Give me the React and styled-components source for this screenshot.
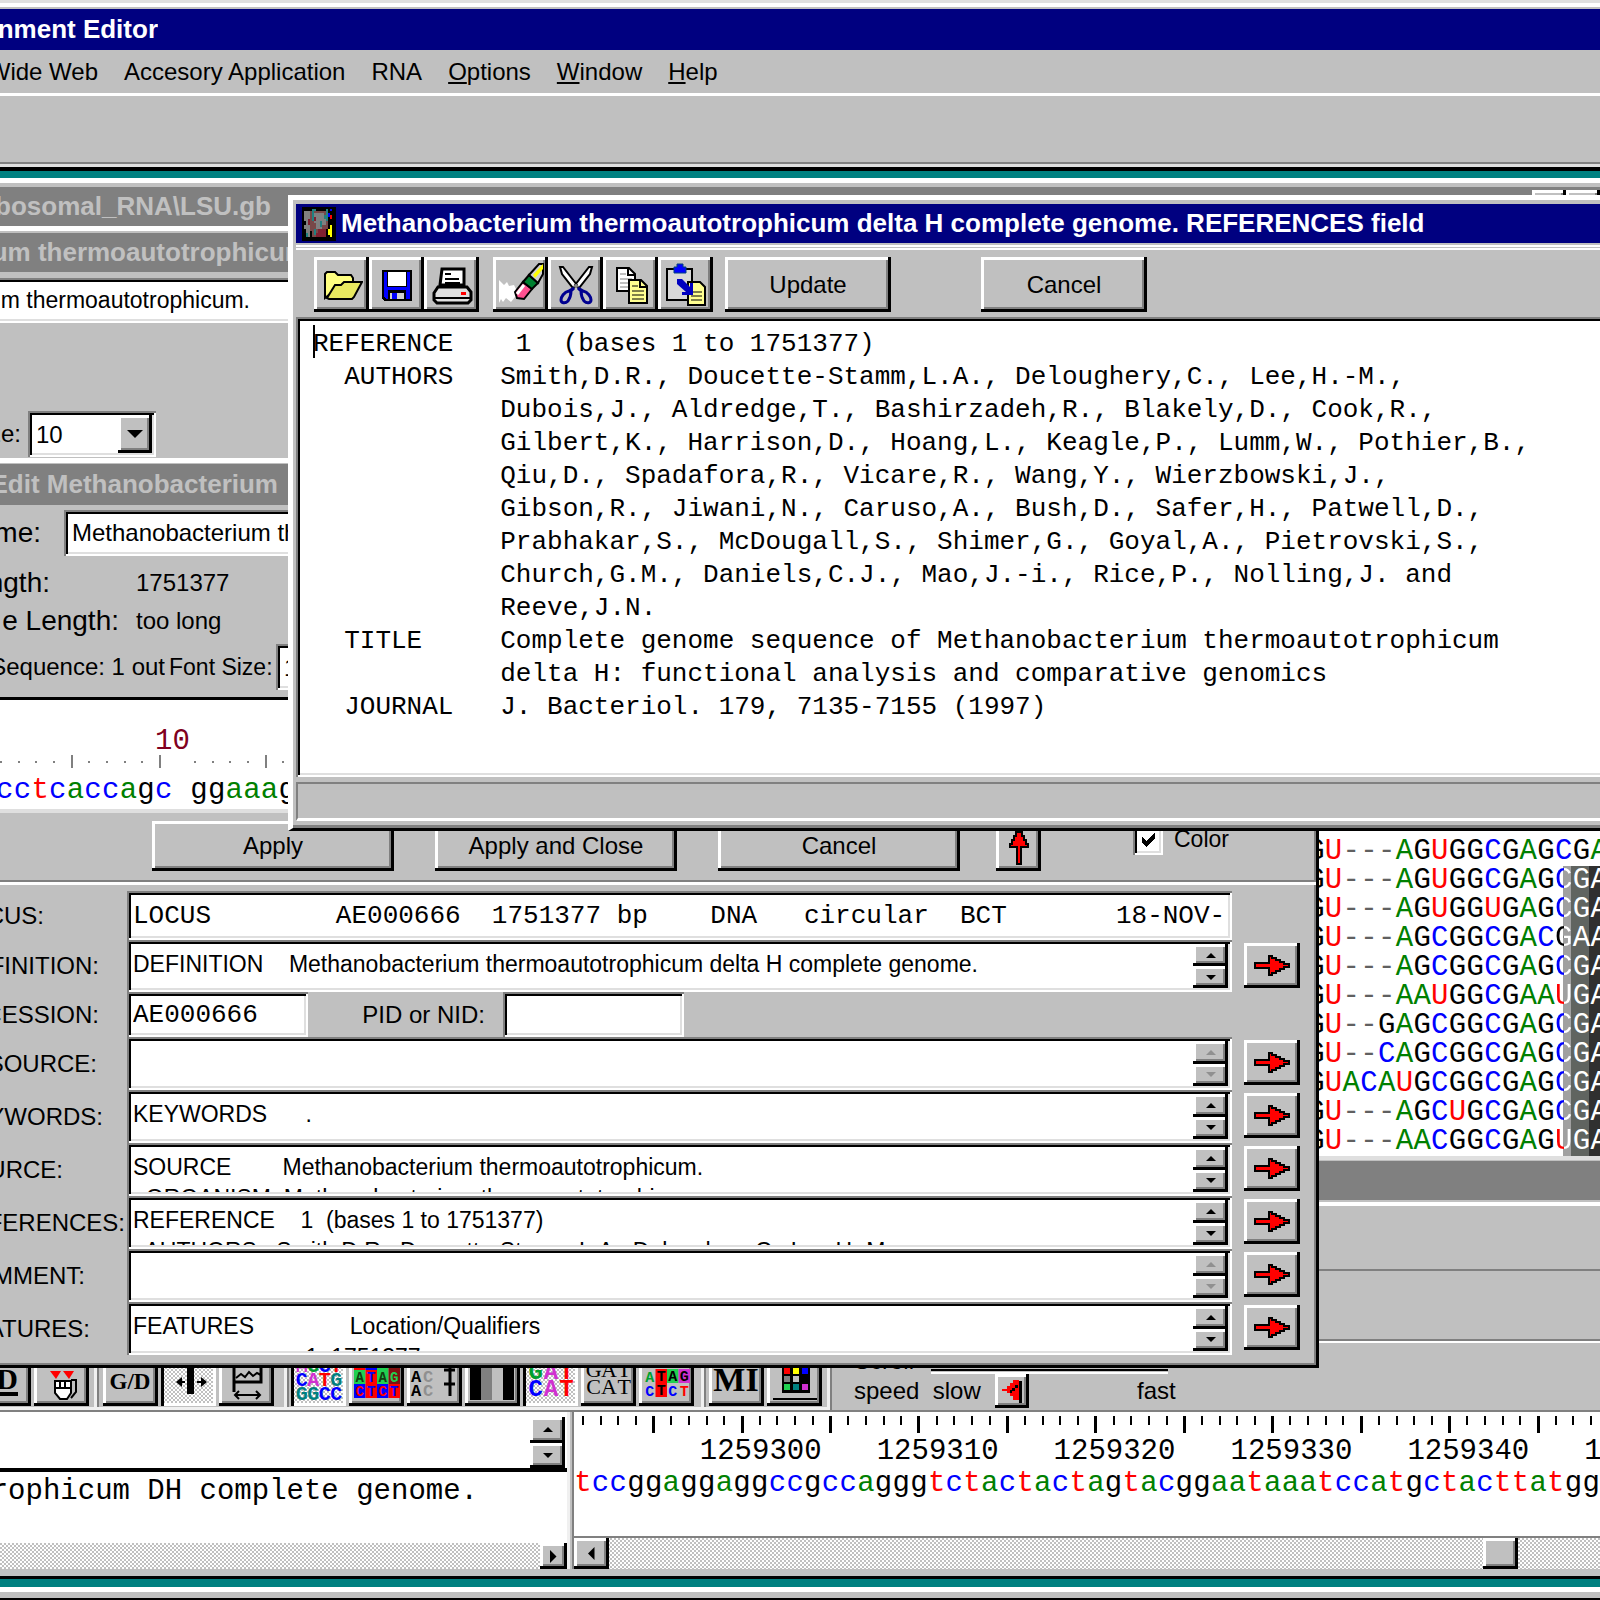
import React from "react";
import styled, { createGlobalStyle, css } from "styled-components";

const UI = '"Liberation Sans", Arial, sans-serif';
const MONO = '"Liberation Mono", "Courier New", monospace';
const FACE = "#c0c0c0";

const GlobalStyle = createGlobalStyle`
  * {
    box-sizing: border-box;
  }

  html, body, #root {
    height: 100%;
    margin: 0;
  }

  body {
    overflow: hidden;
    font-family: ${UI};
    font-size: 24px;
    color: #000;
    background-color: ${FACE};
  }

  button, input, select, textarea {
    font: inherit;
    color: inherit;
    margin: 0;
    padding: 0;
    border: none;
    border-radius: 0;
    outline: none;
  }
`;

const raised = css`
  background-color: ${FACE};
  box-shadow: inset -3px -3px #000, inset 3px 3px #fff, inset -5px -5px #808080;
`;

const sunken = css`
  background-color: #fff;
  box-shadow: inset 2px 2px #808080, inset -2px -2px #fff, inset 4px 4px #000,
    inset -4px -4px #dfdfdf;
`;

const dither = css`
  background: repeating-conic-gradient(#fff 0 25%, ${FACE} 0 50%) 0 0 / 4px 4px;
`;

/* ---- frame ---- */

const Frame = styled.div`
  height: 100vh;
  display: flex;
  flex-direction: column;
  overflow: hidden;
`;

const TopEdge = styled.div`
  height: 9px;
  border-top: 3px solid #dfdfdf;
  border-bottom: 2px solid ${FACE};
  background-color: #fff;
`;

const TitleBar = styled.div`
  display: flex;
  align-items: center;
  flex: none;
  height: ${(p) => (p.$main ? 41 : 39)}px;
  background-color: ${(p) => (p.$active ? "#000080" : "#808080")};
  color: ${(p) => (p.$active ? "#fff" : FACE)};
  font-size: 26px;
  font-weight: bold;
  white-space: pre;
`;

/* text that runs off the left side of the screen */
const Clipped = styled.span`
  display: flex;
  justify-content: flex-end;
  flex: none;
  width: ${(p) => p.$end}px;
  overflow: hidden;
  white-space: pre;
`;

const BigLabel = styled(Clipped)`
  font-size: 28px;
`;

const MenuBar = styled.nav`
  display: flex;
  align-items: center;
  gap: 26px;
  height: 43px;
  flex: none;
`;

const MenuItem = styled.button`
  background: none;
  white-space: pre;
`;

const MainTools = styled.div`
  height: 78px;
  flex: none;
  border-top: 3px solid #fff;
  border-bottom: 4px solid #000;
  box-shadow: inset 0 -3px #dfdfdf, inset 0 -5px #808080;
`;

const Client = styled.main`
  flex: 1;
  position: relative;
  overflow: hidden;
  background-color: #008080;
`;

const BottomEdge = styled.div`
  height: 13px;
  flex: none;
  border-top: 5px solid #fff;
  border-bottom: 2px solid #000;
`;

const Window = styled.section`
  position: absolute;
  display: flex;
  flex-direction: column;
  overflow: hidden;
  background-color: ${FACE};
`;

/* ---- shared controls ---- */

const PushButton = styled.button`
  ${raised}
  flex: none;
  width: ${(p) => p.$w}px;
  height: ${(p) => p.$h || 55}px;
  display: flex;
  align-items: center;
  justify-content: center;
`;

const ToolButton = styled(PushButton)`
  width: 55px;
  ${(p) =>
        p.$down &&
        css`
      ${dither}
      box-shadow: inset 3px 3px #000, inset -3px -3px #fff;
    `}
`;

const ComboBox = styled.div`
  ${sunken}
  display: flex;
  align-items: center;
  position: relative;
  flex: none;
  width: ${(p) => p.$w}px;
  height: 46px;
  padding: 4px;
`;

const ComboSelect = styled.select`
  appearance: none;
  background: transparent;
  width: 100%;
  height: 100%;
  padding-left: 4px;
`;

const ComboArrow = styled.span`
  ${raised}
  position: absolute;
  right: 4px;
  top: 4px;
  bottom: 4px;
  width: 34px;
  display: flex;
  align-items: center;
  justify-content: center;
  pointer-events: none;
`;

const Spinner = styled.div`
  display: flex;
  flex-direction: column;
  flex: none;
  width: 35px;
`;

const SpinButton = styled.button`
  ${raised}
  flex: 1;
  min-height: 0;
  display: flex;
  align-items: center;
  justify-content: center;
  color: ${(p) => (p.disabled ? "#909090" : "#000")};
`;

const triangles = {
    up: "M0 6L6 0L12 6z",
    down: "M0 0h12L6 6z",
    left: "M6 0v12L0 6z",
    right: "M0 0v12L6 6z",
};

const Triangle = ({ dir = "down", size = 10 }) => {
    const side = dir === "left" || dir === "right";
    return (
        <svg
            width={side ? size / 2 : size}
            height={side ? size : size / 2}
            viewBox={side ? "0 0 6 12" : "0 0 12 6"}
            fill="currentColor"
        >
            <path d={triangles[dir]} />
        </svg>
    );
};

const Spin = ({ name, disabled }) => (
    <Spinner>
        <SpinButton aria-label={`${name} up`} disabled={disabled}>
            <Triangle dir="up" />
        </SpinButton>
        <SpinButton aria-label={`${name} down`} disabled={disabled}>
            <Triangle dir="down" />
        </SpinButton>
    </Spinner>
);

/* ---- sequences ---- */

const baseColor = {
    a: "#008000",
    A: "#008000",
    c: "#0000ff",
    C: "#0000ff",
    t: "#ff0000",
    U: "#ff0000",
    "-": "#606060",
};

const Bases = styled.div`
  display: grid;
  grid-template-columns: repeat(${(p) => p.$n}, minmax(0, 1fr));
  font-family: ${MONO};
  font-size: 29px;
  line-height: ${(p) => p.$lh || 32}px;
`;

const Base = styled.span`
  display: flex;
  justify-content: center;
  white-space: pre;
  color: ${(p) => p.$color || "#000"};
`;

const HalfBase = styled(Base)`
  color: transparent;
  background: linear-gradient(90deg, ${(p) => p.$color || "#000"} 50%, #fff 50%);
  background-clip: text;
`;

const Sequence = ({ text, lh }) => (
    <Bases $n={text.length} $lh={lh}>
        {text.split("").map((b, i) => (
            <Base key={i} $color={baseColor[b]}>{b}</Base>
        ))}
    </Bases>
);

/* ---- alignment window ---- */

const WindowButtons = styled.div`
  display: flex;
  margin-left: auto;
  height: 33px;
`;

const AlignPane = styled.div`
  flex: 1;
  margin-left: 1307px;
  margin-right: -8px;
  padding-top: 611px;
  background-color: #fff;
`;

const AlignRow = styled.div`
  height: 29px;
  background: ${(p) =>
        p.$shaded
            ? "linear-gradient(90deg, transparent 256px, #a0a0a0 256px 264px, #606460 264px 282px, #303030 282px)"
            : "none"};
`;

const alignment = [
    "GU---AGUGGCGAGCGA",
    "GU---AGUGGCGAGCGA",
    "GU---AGUGGUGAGCGA",
    "GU---AGCGGCGACGAA",
    "GU---AGCGGCGAGCGA",
    "GU---AAUGGCGAAUGA",
    "GU--GAGCGGCGAGCGA",
    "GU--CAGCGGCGAGCGA",
    "GUACAUGCGGCGAGCGA",
    "GU---AGCUGCGAGCGA",
    "GU---AACGGCGAGUGA",
];

const AlignmentWindow = styled(Window)`
  top: 7px;
  left: 0;
  right: 0;
  height: 979px;
  border-top: 5px solid #fff;
  padding-top: 4px;
`;

const Alignment = () => (
    <AlignmentWindow>
        <TitleBar>
            <Clipped $end={271}>ribosomal_RNA\LSU.gb</Clipped>
            <WindowButtons>
                <PushButton $w={34} $h={31} aria-label="Minimize" />
                <PushButton $w={34} $h={31} aria-label="Restore" />
            </WindowButtons>
        </TitleBar>
        <AlignPane>
            {alignment.map((row, r) => (
                <AlignRow key={r} $shaded={r > 0}>
                    <Bases $n={row.length} $lh={29}>
                        {row.split("").map((b, i) => {
                            if (r > 0 && i === 14) {
                                return <HalfBase key={i} $color={baseColor[b]}>{b}</HalfBase>;
                            }
                            return <Base key={i} $color={r > 0 && i > 14 ? "#fff" : baseColor[b]}>{b}</Base>;
                        })}
                    </Bases>
                </AlignRow>
            ))}
        </AlignPane>
    </AlignmentWindow>
);

/* ---- genome window behind the editor ---- */

const OrganismWindow = styled(Window)`
  top: 55px;
  left: 0;
  width: 900px;
  height: 300px;
  border-top: 5px solid #fff;
  padding-top: 2px;
`;

const OrganismField = styled.div`
  ${sunken}
  display: flex;
  align-items: center;
  height: 45px;
  margin: 6px 0 0 -10px;
`;

const OrganismInput = styled.input`
  width: 260px;
  text-align: right;
  background: transparent;
  font-size: 23px;
`;

const SizeRow = styled.div`
  display: flex;
  align-items: center;
  gap: 7px;
  margin-top: 88px;
`;

const Organism = () => (
    <OrganismWindow>
        <TitleBar>
            <Clipped $end={308}>Methanobacterium thermoautotrophicum</Clipped>
        </TitleBar>
        <OrganismField>
            <OrganismInput aria-label="Organism" defaultValue="m thermoautotrophicum." />
        </OrganismField>
        <SizeRow>
            <Clipped as="label" htmlFor="view-size" $end={21}>Size:</Clipped>
            <ComboBox $w={128}>
                <ComboSelect id="view-size" defaultValue="10">
                    <option>10</option>
                </ComboSelect>
                <ComboArrow>
                    <Triangle size={16} />
                </ComboArrow>
            </ComboBox>
        </SizeRow>
    </OrganismWindow>
);

/* ---- sequence editor ---- */

const EditWindow = styled(Window)`
  top: 287px;
  left: 0;
  width: 1319px;
  border-top: 5px solid #fff;
  border-right: 3px solid #000;
  border-bottom: 3px solid #000;
  box-shadow: inset -2px -2px #808080;
  padding: 1px 0 10px;
`;

const Row = styled.div`
  display: flex;
  align-items: center;
  gap: ${(p) => p.$gap || 0}px;
  height: ${(p) => p.$h}px;
`;

const NameInput = styled.input`
  ${sunken}
  width: 800px;
  height: 46px;
  padding: 0 8px;
`;

const FontLabel = styled.label`
  flex: none;
  width: 103px;
  font-size: 23px;
  white-space: pre;
`;

const SeqPane = styled.div`
  height: 116px;
  border-top: 3px solid #000;
  border-bottom: 4px solid #dfdfdf;
  background-color: #fff;
  padding-top: 29px;
`;

const SeqBox = styled.div`
  width: 300px;
  margin-left: -4px;
`;

const Position = styled.div`
  padding-left: 159px;
  font-family: ${MONO};
  font-size: 29px;
  line-height: 26px;
  color: #800020;
`;

const Ruler = styled.div`
  display: grid;
  grid-template-columns: repeat(17, minmax(0, 1fr));
  align-items: center;
  height: 8px;
`;

const RulerMark = styled.span`
  width: 2px;
  margin-left: 4px;
  height: ${(p) => (p.$major ? 13 : 2)}px;
  background-color: ${(p) => (p.$blank ? "transparent" : "#808080")};
`;

const Actions = styled.div`
  display: flex;
  gap: 41px;
  height: 69px;
  padding: 8px 0 0 152px;
  border-bottom: 2px solid #808080;
`;

const MoreActions = styled.div`
  display: flex;
  gap: 92px;
  margin-left: -5px;
`;

const Divider = styled.div`
  height: 3px;
  margin-bottom: 6px;
  background-color: #fff;
`;

const ColorCheck = styled.label`
  display: flex;
  align-items: center;
  gap: 11px;
  height: 37px;
  font-size: 23px;
`;

const CheckInput = styled.input`
  ${sunken}
  appearance: none;
  width: 30px;
  height: 30px;
`;

const CheckWrap = styled.span`
  position: relative;
  display: flex;

  svg {
    position: absolute;
    left: 8px;
    top: 7px;
    pointer-events: none;
  }

  input:not(:checked) + svg {
    display: none;
  }
`;

const Field = styled.div`
  display: flex;
  height: ${(p) => p.$h || 53}px;
  padding-right: 16px;
`;

const FieldLabel = styled(Clipped).attrs({ as: "label" })`
  align-self: center;
  margin-right: ${(p) => 127 - p.$end}px;
`;

const FieldBox = styled.div`
  ${sunken}
  display: flex;
  flex: ${(p) => (p.$w ? "none" : 1)};
  width: ${(p) => p.$w || 0}px;
  padding: 4px;
`;

const FieldText = styled.textarea`
  flex: 1;
  display: block;
  resize: none;
  overflow: hidden;
  background: transparent;
  padding: 5px 2px 0;
  font-size: 23px;
  line-height: 31px;
  white-space: pre;
`;

const FieldInput = styled.input`
  flex: 1;
  min-width: 0;
  background: transparent;
  padding: 0 2px;
  font-family: ${MONO};
  font-size: 26px;
`;

const FieldSide = styled.div`
  display: flex;
  align-items: flex-start;
  justify-content: flex-end;
  width: 68px;
  padding-top: 3px;
`;

const PidLabel = styled.label`
  width: 195px;
  padding-right: 18px;
  text-align: right;
  align-self: center;
`;

const ArrowRight = () => (
    <svg width="36" height="22" viewBox="0 0 36 22" shapeRendering="crispEdges">
        <path d="M1 8h14v-7h3v2h4v2h4v2h4v2h5v3h-5v2h-4v2h-4v2h-4v2h-3v-7h-14z" fill="#f00" stroke="#000" strokeWidth="2" />
    </svg>
);

const ArrowUp = () => (
    <svg width="22" height="38" viewBox="0 0 22 38" shapeRendering="crispEdges">
        <path d="M9 37v-17h-7v-3h2v-4h2v-4h2v-4h2v-4h2v4h2v4h2v4h2v4h2v3h-7v17z" fill="#f00" stroke="#000" strokeWidth="2" />
    </svg>
);

const fields = [
    { name: "DEFINITION", end: 99, h: 52, text: "DEFINITION    Methanobacterium thermoautotrophicum delta H complete genome." },
    { name: "DBSOURCE", end: 97, text: "", empty: true },
    { name: "KEYWORDS", end: 103, text: "KEYWORDS      ." },
    { name: "SOURCE", end: 63, text: "SOURCE        Methanobacterium thermoautotrophicum.\n  ORGANISM  Methanobacterium thermoautotrophicum" },
    { name: "REFERENCES", end: 125, text: "REFERENCE    1  (bases 1 to 1751377)\n  AUTHORS   Smith,D.R., Doucette-Stamm,L.A., Deloughery,C., Lee,H.-M.," },
    { name: "COMMENT", end: 85, text: "", empty: true },
    { name: "FEATURES", end: 90, text: "FEATURES               Location/Qualifiers\n                           1..1751377" },
];

const TextField = ({ name, end, h, text, empty }) => (
    <Field $h={h}>
        <FieldLabel $end={end} htmlFor={name}>{name}:</FieldLabel>
        <FieldBox>
            <FieldText id={name} defaultValue={text} spellCheck={false} />
            <Spin name={name} disabled={empty} />
        </FieldBox>
        <FieldSide>
            <PushButton $w={56} $h={45} aria-label={`Edit ${name}`}>
                <ArrowRight />
            </PushButton>
        </FieldSide>
    </Field>
);

const Editor = () => (
    <EditWindow>
        <TitleBar $main>
            <Clipped $end={278}>Edit Methanobacterium</Clipped>
        </TitleBar>
        <Row $h={56} $gap={23}>
            <BigLabel as="label" htmlFor="seq-name" $end={41}>Name:</BigLabel>
            <NameInput id="seq-name" defaultValue="Methanobacterium thermoautotrophicum" />
        </Row>
        <Row $h={44} $gap={86}>
            <BigLabel $end={50}>Length:</BigLabel>
            <span>1751377</span>
        </Row>
        <Row $h={32} $gap={17}>
            <BigLabel $end={119}>e Length:</BigLabel>
            <span>too long</span>
        </Row>
        <Row $h={60} $gap={4}>
            <Clipped $end={165}>Sequence: 1 out</Clipped>
            <FontLabel htmlFor="font-size">Font Size:</FontLabel>
            <ComboBox $w={128}>
                <ComboSelect id="font-size" defaultValue="10">
                    <option>10</option>
                </ComboSelect>
                <ComboArrow>
                    <Triangle size={16} />
                </ComboArrow>
            </ComboBox>
        </Row>
        <SeqPane>
            <SeqBox>
                <Position>10</Position>
                <Ruler>
                    {Array.from({ length: 17 }, (_, i) => (
                        <RulerMark key={i} $major={i === 4 || i === 9 || i === 15} $blank={i === 10} />
                    ))}
                </Ruler>
                <Sequence text="cctcaccagc ggaaag" lh={56} />
            </SeqBox>
        </SeqPane>
        <Actions>
            <PushButton $w={242} $h={50}>Apply</PushButton>
            <PushButton $w={242} $h={50}>Apply and Close</PushButton>
            <PushButton $w={242} $h={50}>Cancel</PushButton>
            <MoreActions>
                <PushButton $w={45} $h={50} aria-label="Move up">
                    <ArrowUp />
                </PushButton>
                <ColorCheck>
                    <CheckWrap>
                        <CheckInput type="checkbox" defaultChecked />
                        <svg width="15" height="16" viewBox="0 0 15 16" shapeRendering="crispEdges">
                            <path d="M1 5v6l4 4 9-9V0L5 9z" />
                        </svg>
                    </CheckWrap>
                    Color
                </ColorCheck>
            </MoreActions>
        </Actions>
        <Divider />
        <Field $h={49}>
            <FieldLabel $end={44} htmlFor="locus">LOCUS:</FieldLabel>
            <FieldBox>
                <FieldInput
                    id="locus"
                    defaultValue="LOCUS        AE000666  1751377 bp    DNA   circular  BCT       18-NOV-"
                />
            </FieldBox>
            <FieldSide />
        </Field>
        <TextField {...fields[0]} />
        <Field $h={45}>
            <FieldLabel $end={99} htmlFor="accession">ACCESSION:</FieldLabel>
            <FieldBox $w={181}>
                <FieldInput id="accession" defaultValue="AE000666" />
            </FieldBox>
            <PidLabel htmlFor="pid">PID or NID:</PidLabel>
            <FieldBox $w={181}>
                <FieldInput id="pid" />
            </FieldBox>
        </Field>
        {fields.slice(1).map((f) => (
            <TextField key={f.name} {...f} />
        ))}
    </EditWindow>
);

/* ---- sequence view at the bottom ---- */

const ViewWindow = styled(Window)`
  top: 985px;
  left: 0;
  right: 0;
  bottom: 8px;
  border-bottom: 3px solid #000;
  border-top: 4px solid #dfdfdf;
  padding: 1px 0 7px;
`;

const Strip = styled.div`
  flex: none;
  height: ${(p) => p.$h}px;
  border-bottom: 2px solid #808080;
`;

const WhiteLine = styled.div`
  flex: none;
  height: ${(p) => p.$h}px;
  margin-top: ${(p) => p.$mt || 0}px;
  background-color: #fff;
`;

const ViewTools = styled.div`
  display: flex;
  align-items: flex-start;
  flex: none;
  height: 69px;
  border-bottom: 2px solid #808080;
`;

const ToolGroup = styled.div`
  display: flex;
  gap: 3px;
  height: 67px;
  padding: 8px ${(p) => p.$end}px 0 ${(p) => p.$start || 0}px;
  border-right: 3px solid #f0f0f0;
  border-bottom: 3px solid #f0f0f0;
  box-shadow: 2px 0 #808080;
`;

const EdgeButton = styled(ToolButton)`
  margin-left: -24px;
`;

const SpeedBox = styled.div`
  display: grid;
  grid-template-columns: 123px 34px 72px auto;
  align-items: center;
  column-gap: 18px;
  padding: 5px 0 0 24px;
  line-height: 26px;
`;

const SpeedLabel = styled.span`
  white-space: pre;
`;

const SpeedTrack = styled.span`
  grid-column: 2 / 5;
  width: 237px;
  height: 5px;
  align-self: end;
  margin-left: -64px;
  border-top: 2px solid #000;
  border-bottom: 2px solid #fff;
`;

const Panes = styled.div`
  display: flex;
  flex: 1;
  min-height: 0;
  background-color: ${FACE};
`;

const NamePane = styled.div`
  display: flex;
  flex-direction: column;
  flex: none;
  width: 567px;
  background-color: #fff;
`;

const NameTop = styled.div`
  display: flex;
  justify-content: flex-end;
  height: 60px;
  padding: 5px 2px 0 0;
  border-bottom: 4px solid #000;
`;

const NameLine = styled.div`
  flex: 1;
  padding-top: 4px;
  font-family: ${MONO};
  font-size: 29px;
  line-height: 32px;
`;

const ScrollBar = styled.div`
  ${dither}
  display: flex;
  flex: none;
  justify-content: space-between;
  height: ${(p) => p.$h}px;
`;

const Splitter = styled.div`
  width: 7px;
  flex: none;
  background-color: ${FACE};
  border-left: 3px solid #f0f0f0;
  border-right: 2px solid #808080;
`;

const SeqView = styled.div`
  display: flex;
  flex-direction: column;
  flex: 1;
  min-width: 0;
  background-color: #fff;
`;

const SeqBody = styled.div`
  flex: 1;
  padding-top: 4px;
  border-bottom: 2px solid #808080;
`;

const Ticks = styled.div`
  display: grid;
  grid-template-columns: repeat(58, minmax(0, 1fr));
  justify-items: center;
  height: 20px;
`;

const Tick = styled.span`
  width: ${(p) => (p.$major ? 3 : 2)}px;
  height: ${(p) => (p.$major ? 17 : 9)}px;
  background-color: #000;
`;

const Numbers = styled.div`
  display: grid;
  grid-template-columns: repeat(58, minmax(0, 1fr));
  overflow: hidden;
  font-family: ${MONO};
  font-size: 29px;
  line-height: 32px;
`;

const Number = styled.span`
  grid-column: ${(p) => p.$col} / span ${(p) => Math.min(7, 59 - p.$col)};
  grid-row: 1;
  padding-left: 2px;
`;

const Thumb = styled(PushButton)`
  margin-right: 82px;
`;

const Letters = ({ rows, y, size = 15, step = 14, font = "Liberation Mono" }) => (
    <svg width="49" height="50" viewBox="0 0 49 50">
        {rows.map((row, r) =>
            row.map(([ch, fill, bg], i) => {
                const w = 46 / row.length;
                return (
                    <g key={`${r}-${i}`}>
                        {bg && <rect x={2 + i * w} y={y + r * step - 13} width={w} height="14" fill={bg} />}
                        <text
                            x={2 + i * w + w / 2}
                            y={y + r * step - (bg ? 1 : 0)}
                            fontSize={size}
                            fontWeight={font === "Liberation Mono" ? "bold" : "normal"}
                            fontFamily={font}
                            textAnchor="middle"
                            fill={fill}
                        >
                            {ch}
                        </text>
                    </g>
                );
            })
        )}
    </svg>
);

const SerifIcon = ({ text, size, y = 35, x = 24, line }) => (
    <svg width="49" height="50" viewBox="0 0 49 50">
        <text x={x} y={y} textAnchor="middle" fontFamily="Liberation Serif, serif" fontWeight="bold" fontSize={size}>{text}</text>
        {line && <rect x="10" y="38" width="29" height="4" />}
    </svg>
);

const G = "#00a030";
const B = "#0000ff";
const R = "#ff0000";
const P = "#d030d0";
const T = "#008080";
const L = "#20d050";
const K = "#000000";

const MouseIcon = () => (
    <svg width="49" height="50" viewBox="0 0 49 50">
        <path d="M13 17h11l-5 8zM26 17h11l-5 8z" fill="#f00" />
        <path d="M18 27h16v12l-4 6h-7l-5-6z" fill="#fff" stroke="#000" strokeWidth="2" />
        <path d="M18 34h16M23 27v7M28 27v7M34 26h5v12l-5 6" fill="none" stroke="#000" strokeWidth="2" />
    </svg>
);

const SplitIcon = () => (
    <svg width="49" height="50" viewBox="0 0 49 50">
        <path d="M23 4h7v36h-7zM12 28l6-5v4h3v2h-3v4zM43 28l-6-5v4h-4v2h4v4z" />
    </svg>
);

const PlotIcon = () => (
    <svg width="49" height="50" viewBox="0 0 49 50" fill="none" stroke="#000" strokeWidth="3">
        <path d="M12 8v30M12 28h27v-20" />
        <path d="M14 24l5-4 4 3 4-5 4 4 4-3 4 2" strokeWidth="2" />
        <path d="M13 41h25M17 37l-4 4 4 4M34 37l4 4-4 4" strokeWidth="2" />
    </svg>
);

const StripesIcon = () => (
    <svg width="49" height="50" viewBox="0 0 49 50" shapeRendering="crispEdges">
        <path d="M2 4h11v42h-11zM35 4h11v42h-11z" />
        <path d="M13 4h11v42h-11z" fill="#808080" />
    </svg>
);

const DaggerIcon = () => (
    <svg width="49" height="50" viewBox="0 0 49 50">
        {[28, 42].map((y) => (
            <g key={y} fontFamily="Liberation Mono" fontSize="17" fontWeight="bold">
                <text x="1" y={y}>A</text>
                <text x="13" y={y} fill="#909090">C</text>
            </g>
        ))}
        <path d="M34 16h11M34 30h11M40 8v34" stroke="#000" strokeWidth="3" />
    </svg>
);

const PaletteIcon = () => (
    <svg width="49" height="50" viewBox="0 0 49 50" shapeRendering="crispEdges">
        <path d="M12 6h28v33h-28zM3 44h44v2h-44z" />
        {["#ff0000", "#ffff00", "#0000ff", "#808080", "#c0c0c0", "#000", L, T, P].map((c, i) => (
            <rect key={i} x={14 + (i % 3) * 9} y={14 + Math.floor(i / 3) * 8} width="6" height="6" fill={c} />
        ))}
    </svg>
);

const SpeakerIcon = () => (
    <svg width="24" height="28" viewBox="0 0 24 28" shapeRendering="crispEdges">
        <path d="M2 12h5v-3h3v-3h3v-3h6v20h-6v-4h-3v-3h-3v-2h-5z" fill="#f00" />
        <path d="M19 4h3v22h-3zM15 8h3v3h-3zM12 11h3v3h-3zM10 13h2v3h-2z" />
    </svg>
);

const letterIcons = {
    pairs: [[["M", P], ["G", G], ["C", B], ["T", R]], [["C", B], ["A", P], ["T", R], ["G", T]], [["G", T], ["G", T], ["C", B], ["C", B]]],
    blocks: [[["A", B, R], ["T", R, B], ["A", B, L], ["G", R, "#801010"]], [["A", "#104010", L], ["T", B, R], ["A", "#104010", L], ["G", L, "#801010"]], [["C", R, B], ["T", B, R], ["C", R, B], ["T", B, R]]],
    cat: [[["G", G], ["A", P], ["T", R]], [["C", B], ["A", P], ["T", R]]],
    catBlack: [[["G", K], ["A", K], ["T", K]], [["C", K], ["A", K], ["T", K]]],
    mixed: [[["A", G], ["T", K, R], ["A", K, L], ["G", K, P]], [["C", B], ["T", K, R], ["C", B], ["T", R]]],
};

const View = () => (
    <ViewWindow>
        <TitleBar />
        <WhiteLine $h={4} $mt={2} />
        <Strip $h={65} />
        <Strip $h={70} />
        <WhiteLine $h={2} />
        <ViewTools>
            <ToolGroup $end={5}>
                <EdgeButton aria-label="Underline">
                    <SerifIcon text="D" x={28} size={30} line />
                </EdgeButton>
                <ToolButton aria-label="Select"><MouseIcon /></ToolButton>
            </ToolGroup>
            <ToolGroup $start={6} $end={10}>
                <ToolButton aria-label="G/D"><SerifIcon text="G/D" size={23} /></ToolButton>
                <ToolButton $down aria-label="Split"><SplitIcon /></ToolButton>
                <ToolButton aria-label="Plot"><PlotIcon /></ToolButton>
            </ToolGroup>
            <ToolGroup $start={4} $end={7}>
                <ToolButton $down aria-label="Colored letters"><Letters rows={letterIcons.pairs} y={18} size={20} /></ToolButton>
                <ToolButton aria-label="Colored blocks"><Letters rows={letterIcons.blocks} y={15} size={14} /></ToolButton>
                <ToolButton aria-label="Identity"><DaggerIcon /></ToolButton>
                <ToolButton aria-label="Shading"><StripesIcon /></ToolButton>
                <ToolButton $down aria-label="Color text"><Letters rows={letterIcons.cat} y={25} size={24} step={17} /></ToolButton>
                <ToolButton aria-label="Black text">
                    <Letters rows={letterIcons.catBlack} y={23} size={22} step={17} font="Liberation Serif" />
                </ToolButton>
                <ToolButton aria-label="Mixed"><Letters rows={letterIcons.mixed} y={28} size={15} /></ToolButton>
            </ToolGroup>
            <ToolGroup $start={5} $end={5}>
                <ToolButton aria-label="MI"><SerifIcon text="MI" y={37} size={34} /></ToolButton>
                <ToolButton aria-label="Palette"><PaletteIcon /></ToolButton>
            </ToolGroup>
            <SpeedBox>
                <SpeedLabel>Scroll</SpeedLabel>
                <SpeedTrack />
                <SpeedLabel>speed  slow</SpeedLabel>
                <PushButton $w={34} $h={34} aria-label="Speed"><SpeakerIcon /></PushButton>
                <span />
                <SpeedLabel>fast</SpeedLabel>
            </SpeedBox>
        </ViewTools>
        <Panes>
            <NamePane>
                <NameTop>
                    <Spin name="Rows" />
                </NameTop>
                <NameLine>
                    <Clipped $end={478}>rophicum DH complete genome.</Clipped>
                </NameLine>
                <ScrollBar $h={26}>
                    <span />
                    <PushButton $w={27} $h={26} aria-label="Scroll right">
                        <Triangle dir="right" size={13} />
                    </PushButton>
                </ScrollBar>
            </NamePane>
            <Splitter />
            <SeqView>
                <SeqBody>
                    <Ticks>
                        {Array.from({ length: 58 }, (_, i) => (
                            <Tick key={i} $major={i % 5 === 4} />
                        ))}
                    </Ticks>
                    <Numbers>
                        {[1259300, 1259310, 1259320, 1259330, 1259340, 1259350].map((n, i) => (
                            <Number key={n} $col={8 + i * 10}>{n}</Number>
                        ))}
                    </Numbers>
                    <Sequence text="tccggaggaggccgccagggtctactactagtacggaataaatccatgctacttatgg" />
                </SeqBody>
                <ScrollBar $h={31}>
                    <PushButton $w={35} $h={31} aria-label="Scroll left">
                        <Triangle dir="left" size={13} />
                    </PushButton>
                    <Thumb $w={35} $h={31} aria-label="Scroll position" />
                </ScrollBar>
            </SeqView>
        </Panes>
    </ViewWindow>
);

/* ---- references dialog ---- */

const DialogWindow = styled(Window)`
  top: 24px;
  left: 288px;
  right: -20px;
  padding: 4px 8px 3px 3px;
  border-top: 5px solid #fff;
  border-left: 5px solid #fff;
  border-bottom: 3px solid #000;
  box-shadow: inset 0 -3px #808080;
`;

const DialogTitle = styled(TitleBar)`
  gap: 5px;
  padding-left: 5px;
`;

const DialogTools = styled.div`
  display: flex;
  margin-top: 2px;
  padding: 7px 0 5px 18px;
  border-top: 5px double #fff;
`;

const Gap = styled.span`
  flex: none;
  width: ${(p) => p.$w}px;
`;

const RefBox = styled.div`
  ${sunken}
  position: relative;
  display: flex;
  height: 460px;
  padding: 4px;
`;

const RefText = styled.textarea`
  flex: 1;
  resize: none;
  overflow: hidden;
  background: transparent;
  padding: 7px 0 0 13px;
  font-family: ${MONO};
  font-size: 26px;
  line-height: 33px;
  white-space: pre;
`;

const Caret = styled.span`
  position: absolute;
  left: 17px;
  top: 8px;
  width: 2px;
  height: 33px;
  background-color: #000;
`;

const StatusBar = styled.div`
  height: 39px;
  margin: 5px 0 4px;
  border-top: 2px solid #808080;
  border-left: 2px solid #808080;
  border-bottom: 3px solid #fff;
`;

const AppIcon = () => (
    <svg width="35" height="34" viewBox="0 0 17 17" shapeRendering="crispEdges">
        <path d="M0 0h17v17h-17z" />
        <path d="M1 2h3v3h1v6h-1v4h-2v-4h-1v-2h1v-2h-1z" fill="#808080" />
        <path d="M4 2h9v9h-1v4h-7v-3h-1z" fill="#784848" />
        <path d="M6 3h5v2h1v4h-2v2h-3v-3h-1z" fill="#808080" />
        <path d="M5 1h2v1h-1v5h-1zM9 7h1v3h-1zM12 1h1v6h-1zM6 11h1v3h-1zM11 4h1v2h-1zM2 13h1v2h-1z" fill="#208080" />
        <path d="M8 11h4v4h-5v-2h1zM3 6h1v3h-1zM6 5h1v2h-1z" fill="#802030" />
        <path d="M14 9h1v6h-1v-1h-1v-3h1z" fill="#ffff00" />
        <path d="M13 3h1v2h-1zM14 1h1v1h-1z" fill="#0000ff" />
        <path d="M14 4h1v2h-1z" fill="#ff0000" />
    </svg>
);

const OpenIcon = () => (
    <svg width="42" height="40" viewBox="0 0 42 40">
        <path d="M4 33V9l2-2h8l3 3h13l2 3v6l-14 3z" fill="#ffff80" stroke="#000" strokeWidth="2" />
        <path d="M6 33L14 20h6l3-3h18L33 32l-2 2H8z" fill="#e8e860" stroke="#000" strokeWidth="2" />
    </svg>
);

const SaveIcon = () => (
    <svg width="40" height="40" viewBox="0 0 40 40" shapeRendering="crispEdges">
        <path d="M5 5h30v31h-28l-2-2z" />
        <path d="M7 7h26v27h-24l-2-2z" fill="#0000ff" />
        <path d="M10 5h20v17h-20z" />
        <path d="M11 7h18v14h-18z" fill="#fff" />
        <path d="M11 25h18v11h-18z" />
        <path d="M13 28h14v6h-14z" fill="#d0d0d0" />
        <path d="M15 28h5v6h-5z" fill="#0000ff" />
    </svg>
);

const PrintIcon = () => (
    <svg width="42" height="40" viewBox="0 0 42 40">
        <path d="M9 20L11 4h22v16z" fill="#fff" stroke="#000" strokeWidth="3" />
        <path d="M14 9h6M14 14h14M14 18h15" stroke="#000" strokeWidth="2" />
        <path d="M3 28l4-6h29l4 5v8l-3 3H6l-3-3z" fill="#e0e0e0" stroke="#000" strokeWidth="3" />
        <path d="M3 33h36" stroke="#000" strokeWidth="2" />
        <path d="M30 27h5v3h-5z" fill="#f00" />
    </svg>
);

const EraseIcon = () => (
    <svg width="50" height="48" viewBox="0 0 50 48">
        <path d="M3 19l5 5 3-3 2 4 5-1 3 6 8 5-6 2-4-1-4 5-5-4-3 4-2-3-2 4z" fill="#fff" />
        <path d="M19 31l8-10 9 7-8 10-7-1z" fill="#ff5090" stroke="#000" strokeWidth="2" />
        <path d="M21 33l7-9" stroke="#fff" strokeWidth="3" />
        <path d="M27 21l6-7 9 8-6 6z" fill="#008030" stroke="#000" strokeWidth="2" />
        <path d="M33 14L43 3h4v10l-5 9z" fill="#d0d0d0" stroke="#000" strokeWidth="2" />
        <path d="M37 14L47 3v5l-8 9z" fill="#ffff00" />
    </svg>
);

const CutIcon = () => (
    <svg width="40" height="42" viewBox="0 0 40 42">
        <path d="M4 3l2 7 11 14 4-3L7 3zM36 3l-2 7-11 14-4-3L33 3z" fill="#fff" stroke="#000" strokeWidth="2" />
        <circle cx="20" cy="22" r="2" fill="#888" />
        <g fill="none" stroke="#000090" strokeWidth="3">
            <path d="M18 24l-5 3c-5 1-8 6-8 9s4 4 7 1c2-3 3-6 3-10zM22 24l5 3c5 1 8 6 8 9s-4 4-7 1c-2-3-3-6-3-10z" />
        </g>
    </svg>
);

const Sheet = ({ x, y, fill, lines }) => (
    <g transform={`translate(${x} ${y})`}>
        <path d="M1 1h12l6 6v17H1z" fill={fill} stroke="#000" strokeWidth="2" />
        <path d="M12 1v7h7" fill="none" stroke="#000" strokeWidth="2" />
        <path d="M4 7h6M4 12h12M4 16h12M4 20h12" fill="none" stroke={lines} strokeWidth="1" />
    </g>
);

const CopyIcon = () => (
    <svg width="40" height="42" viewBox="0 0 40 42">
        <Sheet x={5} y={3} fill="#fff" lines="#808080" />
        <Sheet x={17} y={15} fill="#ffff90" lines="#000" />
    </svg>
);

const PasteIcon = () => (
    <svg width="42" height="44" viewBox="0 0 42 44">
        <path d="M2 6h25v31H2z" fill="#d8d8d8" stroke="#000" strokeWidth="2" />
        <path d="M9 4h3V1h6v3h3v6H9z" fill="#0000ff" stroke="#004080" strokeWidth="1" />
        <path d="M23 19h12l5 5v18H23z" fill="#ffff90" stroke="#000" strokeWidth="2" />
        <path d="M26 29h11M26 33h11M26 37h11" stroke="#000" />
        <path d="M12 16h5l8 8v-4h3v12h-11v-3h4l-9-8z" fill="#0000c0" />
    </svg>
);

const referenceText = `REFERENCE    1  (bases 1 to 1751377)
  AUTHORS   Smith,D.R., Doucette-Stamm,L.A., Deloughery,C., Lee,H.-M.,
            Dubois,J., Aldredge,T., Bashirzadeh,R., Blakely,D., Cook,R.,
            Gilbert,K., Harrison,D., Hoang,L., Keagle,P., Lumm,W., Pothier,B.,
            Qiu,D., Spadafora,R., Vicare,R., Wang,Y., Wierzbowski,J.,
            Gibson,R., Jiwani,N., Caruso,A., Bush,D., Safer,H., Patwell,D.,
            Prabhakar,S., McDougall,S., Shimer,G., Goyal,A., Pietrovski,S.,
            Church,G.M., Daniels,C.J., Mao,J.-i., Rice,P., Nolling,J. and
            Reeve,J.N.
  TITLE     Complete genome sequence of Methanobacterium thermoautotrophicum
            delta H: functional analysis and comparative genomics
  JOURNAL   J. Bacteriol. 179, 7135-7155 (1997)`;

const ReferencesDialog = () => (
    <DialogWindow role="dialog">
        <DialogTitle $active>
            <AppIcon />
            Methanobacterium thermoautotrophicum delta H complete genome. REFERENCES field
        </DialogTitle>
        <DialogTools>
            <ToolButton aria-label="Open"><OpenIcon /></ToolButton>
            <ToolButton aria-label="Save"><SaveIcon /></ToolButton>
            <ToolButton aria-label="Print"><PrintIcon /></ToolButton>
            <Gap $w={14} />
            <ToolButton aria-label="Erase"><EraseIcon /></ToolButton>
            <ToolButton aria-label="Cut"><CutIcon /></ToolButton>
            <ToolButton aria-label="Copy"><CopyIcon /></ToolButton>
            <ToolButton aria-label="Paste"><PasteIcon /></ToolButton>
            <Gap $w={12} />
            <PushButton $w={166}>Update</PushButton>
            <Gap $w={90} />
            <PushButton $w={166}>Cancel</PushButton>
        </DialogTools>
        <RefBox>
            <RefText aria-label="References" spellCheck={false} defaultValue={referenceText} />
            <Caret />
        </RefBox>
        <StatusBar />
    </DialogWindow>
);

const App = () => (
    <>
        <GlobalStyle />
        <Frame>
            <TopEdge />
            <TitleBar $active $main>
                <Clipped $end={158}>Alignment Editor</Clipped>
            </TitleBar>
            <MenuBar>
                <Clipped as={MenuItem} $end={98}>Wide Web</Clipped>
                <MenuItem>Accesory Application</MenuItem>
                <MenuItem>RNA</MenuItem>
                <MenuItem><u>O</u>ptions</MenuItem>
                <MenuItem><u>W</u>indow</MenuItem>
                <MenuItem><u>H</u>elp</MenuItem>
            </MenuBar>
            <MainTools />
            <Client>
                <Alignment />
                <Organism />
                <View />
                <Editor />
                <ReferencesDialog />
            </Client>
            <BottomEdge />
        </Frame>
    </>
);

export default App;
